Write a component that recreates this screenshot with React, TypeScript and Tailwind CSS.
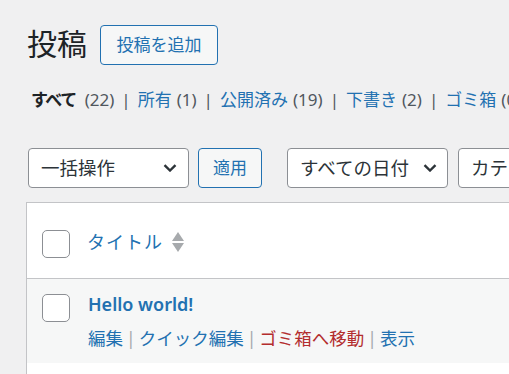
import React from "react";

const Chevron = () => (
  <svg width="14" height="8" viewBox="0 0 14 8" className="shrink-0">
    <path d="M1.5 1.2 L7 6.5 L12.5 1.2" fill="none" stroke="#2c3338" strokeWidth="2.4" />
  </svg>
);

const Checkbox = () => (
  <div className="w-[28px] h-[28px] shrink-0 rounded-[5px] border border-[#8c8f94] bg-white" />
);

const Sep = () => <span className="text-[#50575e] mx-[7px]">|</span>;

export default function App() {
  return (
    <div className="w-[509px] h-[374px] overflow-hidden bg-[#f0f0f1] font-['Noto_Sans','Noto_Sans_CJK_JP',sans-serif] text-[#1d2327]">
      <div className="pl-[26px] w-[700px]">
        {/* header */}
        <div className="flex items-center mt-[25px] h-[40px]">
          <h1 className="ml-[1px] text-[30px] leading-[40px] font-normal text-[#1d2327] -mt-[3px]">投稿</h1>
          <button className="ml-[13px] w-[118px] h-[40px] rounded-[4px] border border-[#2271b1] bg-[#f6f7f7] text-[#2271b1] text-[17px] leading-[38px]">
            投稿を追加
          </button>
        </div>

        {/* filters */}
        <div className="mt-[22px] h-[26px] flex items-center text-[17px] leading-[26px] whitespace-nowrap pl-[5px]">
          <span className="font-bold text-[#1d2327] tracking-[-1.5px]">すべて</span>
          <span className="ml-[9px] text-[#50575e]">(22)</span>
          <Sep />
          <span className="text-[#2271b1]">所有</span>
          <span className="ml-[5px] text-[#50575e]">(1)</span>
          <Sep />
          <span className="text-[#2271b1]">公開済み</span>
          <span className="ml-[5px] text-[#50575e]">(19)</span>
          <Sep />
          <span className="text-[#2271b1]">下書き</span>
          <span className="ml-[5px] text-[#50575e]">(2)</span>
          <Sep />
          <span className="text-[#2271b1]">ゴミ箱</span>
          <span className="ml-[5px] text-[#50575e]">(0)</span>
        </div>

        {/* tablenav */}
        <div className="mt-[35px] flex items-center h-[40px]">
          <div className="ml-[2px] w-[161px] h-[40px] rounded-[4px] border border-[#8c8f94] bg-white flex items-center justify-between pl-[12px] pr-[11px] text-[18.5px] text-[#2c3338]">
            <span>一括操作</span>
            <Chevron />
          </div>
          <button className="ml-[9px] w-[64px] h-[40px] rounded-[4px] border border-[#2271b1] bg-[#f6f7f7] text-[#2271b1] text-[17px]">
            適用
          </button>
          <div className="ml-[25px] w-[161px] h-[40px] rounded-[4px] border border-[#8c8f94] bg-white flex items-center justify-between pl-[12px] pr-[10px] text-[18.5px] text-[#2c3338]">
            <span>すべての日付</span>
            <Chevron />
          </div>
          <div className="ml-[10px] w-[180px] h-[40px] rounded-[4px] border border-[#8c8f94] bg-white flex items-center pl-[12px] text-[18.5px] text-[#2c3338]">
            <span>カテゴリー一覧</span>
          </div>
        </div>

        {/* table */}
        <div className="mt-[14px] border border-[#c3c4c7] bg-white">
          <div className="h-[76px] flex items-start pl-[15px] pt-[27px] border-b border-[#c3c4c7]">
            <Checkbox />
            <div className="ml-[17px] -mt-[2px] flex items-center h-[28px]">
              <span className="text-[18px] text-[#2271b1] tracking-[1px]">タイトル</span>
              <svg width="12" height="21" viewBox="0 0 12 21" className="ml-[9px]">
                <path d="M6 0 L12 9 L0 9 Z" fill="#a7aaad" />
                <path d="M0 11 L12 11 L6 20 Z" fill="#a7aaad" />
              </svg>
            </div>
          </div>
          <div className="h-[84px] bg-[#f6f7f7] flex items-start pl-[15px] pt-[15px]">
            <Checkbox />
            <div className="ml-[18px] -mt-[3px] flex flex-col">
              <span className="text-[18px] leading-[26px] font-semibold text-[#2271b1]">Hello world!</span>
              <div className="mt-[8px] text-[17.5px] leading-[26px] whitespace-nowrap flex">
                <span className="text-[#2271b1]">編集</span>
                <span className="text-[#a7aaad] mx-[3px]">|</span>
                <span className="text-[#2271b1]">クイック編集</span>
                <span className="text-[#a7aaad] mx-[3px]">|</span>
                <span className="text-[#b32d2e]">ゴミ箱へ移動</span>
                <span className="text-[#a7aaad] mx-[3px]">|</span>
                <span className="text-[#2271b1]">表示</span>
              </div>
            </div>
          </div>
          <div className="h-[60px] bg-white" />
        </div>
      </div>
    </div>
  );
}
